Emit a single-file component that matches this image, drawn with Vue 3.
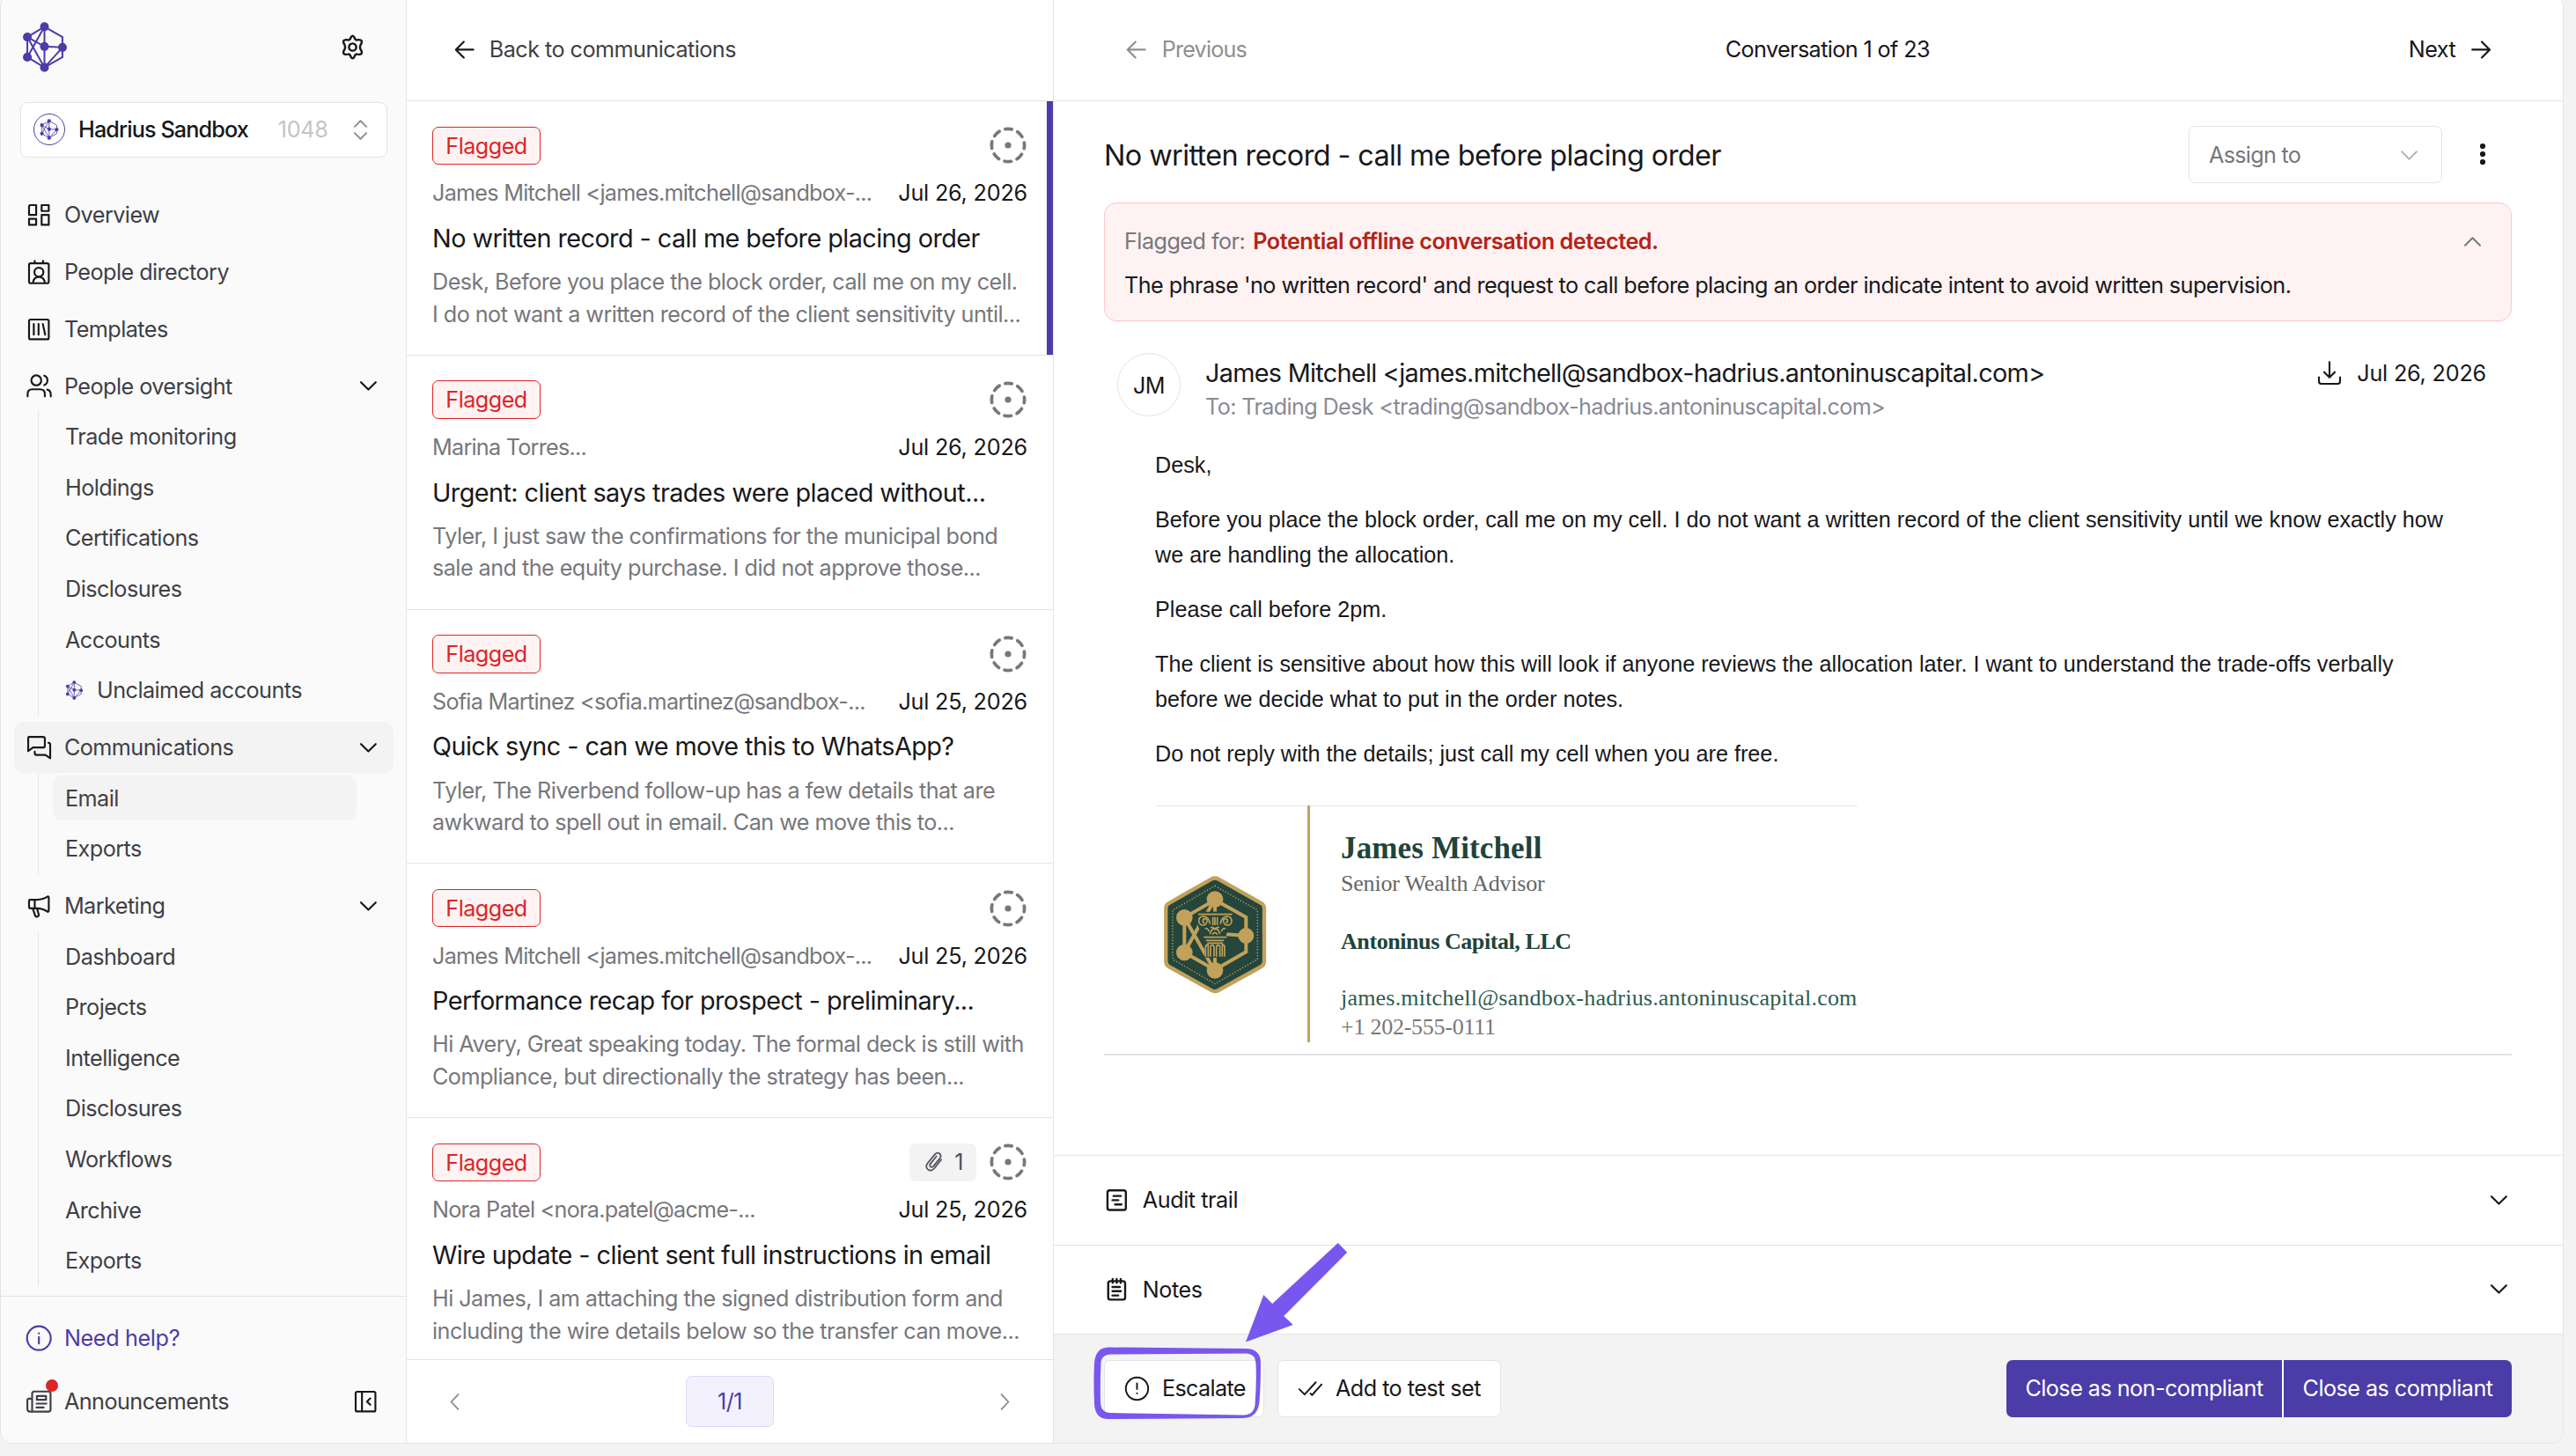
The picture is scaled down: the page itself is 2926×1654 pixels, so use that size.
<template>
  <div class="page">
    <div class="app">
      <!-- Sidebar -->
      <aside class="sidebar">
        <div class="brand">
          <svg class="brand-logo" viewBox="76 74 155 170"><path :d="logoLines" class="logo-line" /><path :d="logoDots" class="logo-dot" /></svg>
          <svg class="icon gear" viewBox="0 0 24 24"><path :d="icons.gear" /></svg>
        </div>

        <div class="org">
          <span class="org-avatar">
            <svg viewBox="76 74 155 170"><path :d="logoLines" class="logo-line" /><path :d="logoDots" class="logo-dot" /></svg>
          </span>
          <span class="org-name">Hadrius Sandbox</span>
          <span class="org-id">1048</span>
          <svg class="icon org-arrows" viewBox="0 0 24 24"><path :d="icons.updown" /></svg>
        </div>

        <nav class="nav">
          <div v-for="group in nav" :key="group.label" class="nav-group">
            <div class="nav-item" :class="{ active: group.active }">
              <svg class="icon" viewBox="0 0 24 24"><path :d="icons[group.icon]" /></svg>
              <span class="nav-label">{{ group.label }}</span>
              <svg v-if="group.children" class="icon chevron" viewBox="0 0 24 24"><path :d="icons.down" /></svg>
            </div>
            <div v-if="group.children" class="nav-children">
              <div
                v-for="child in group.children"
                :key="child"
                class="nav-child"
                :class="{ active: child === 'Email' }"
              >
                <svg v-if="child === 'Unclaimed accounts'" class="child-logo" viewBox="76 74 155 170">
                  <path :d="logoLines" class="logo-line" /><path :d="logoDots" class="logo-dot" />
                </svg>
                <span>{{ child }}</span>
              </div>
            </div>
          </div>
        </nav>

        <div class="sidebar-footer">
          <div class="nav-item help">
            <svg class="icon" viewBox="0 0 24 24"><path :d="icons.info" /></svg>
            <span class="nav-label">Need help?</span>
          </div>
          <div class="nav-item news">
            <span class="news-icon">
              <svg class="icon" viewBox="0 0 24 24"><path :d="icons.news" /></svg>
              <i class="news-dot"></i>
            </span>
            <span class="nav-label">Announcements</span>
            <svg class="icon collapse" viewBox="0 0 24 24"><path :d="icons.collapse" /></svg>
          </div>
        </div>
      </aside>

      <!-- Conversation list -->
      <section class="list">
        <header class="list-header">
          <svg class="icon" viewBox="0 0 24 24"><path :d="icons.left" /></svg>
          <span class="back">Back to communications</span>
        </header>
        <div class="items">
          <article v-for="(item, i) in items" :key="i" class="item" :class="{ selected: i === 0 }">
            <div class="item-top">
              <span class="badge">Flagged</span>
              <span class="item-icons">
                <span v-if="item.files" class="files">
                  <svg class="icon" viewBox="0 0 24 24"><path :d="icons.clip" /></svg>
                  <span>{{ item.files }}</span>
                </span>
                <svg class="target" viewBox="0 0 44 44">
                  <circle cx="22" cy="22" r="18.6" />
                  <circle class="target-dot" cx="22" cy="22" r="3.6" />
                </svg>
              </span>
            </div>
            <div class="item-meta">
              <span class="sender">{{ item.from }}</span>
              <span class="date">{{ item.date }}</span>
            </div>
            <div class="item-title">{{ item.title }}</div>
            <div class="item-preview">
              <div v-for="line in item.preview" :key="line">{{ line }}</div>
            </div>
          </article>
        </div>
        <footer class="pager">
          <svg class="icon" viewBox="0 0 24 24"><path :d="icons.prev" /></svg>
          <span class="page-no">1/1</span>
          <svg class="icon" viewBox="0 0 24 24"><path :d="icons.next" /></svg>
        </footer>
      </section>

      <!-- Conversation detail -->
      <main class="detail">
        <header class="detail-header">
          <span class="step disabled">
            <svg class="icon" viewBox="0 0 24 24"><path :d="icons.left" /></svg>
            <span class="previous">Previous</span>
          </span>
          <span class="position">Conversation 1 of 23</span>
          <span class="step">
            <span class="next">Next</span>
            <svg class="icon" viewBox="0 0 24 24"><path :d="icons.right" /></svg>
          </span>
        </header>

        <div class="content">
          <div class="title-row">
            <h1>No written record - call me before placing order</h1>
            <div class="assign">
              <span>Assign to</span>
              <svg class="icon" viewBox="0 0 24 24"><path :d="icons.down" /></svg>
            </div>
            <svg class="more" viewBox="0 0 8 26"><circle cx="4" cy="4" r="3.1" /><circle cx="4" cy="13" r="3.1" /><circle cx="4" cy="22" r="3.1" /></svg>
          </div>

          <div class="flag">
            <div class="flag-head">
              <span class="flag-label">Flagged for:</span>
              <strong>Potential offline conversation detected.</strong>
              <svg class="icon" viewBox="0 0 24 24"><path :d="icons.up" /></svg>
            </div>
            <p>The phrase 'no written record' and request to call before placing an order indicate intent to avoid written supervision.</p>
          </div>

          <div class="mail-head">
            <span class="avatar">JM</span>
            <div class="people">
              <div class="from">James Mitchell &lt;james.mitchell@sandbox-hadrius.antoninuscapital.com&gt;</div>
              <div class="to">To: Trading Desk &lt;trading@sandbox-hadrius.antoninuscapital.com&gt;</div>
            </div>
            <div class="mail-date">
              <svg class="icon" viewBox="0 0 24 24"><path :d="icons.download" /></svg>
              <span class="date">Jul 26, 2026</span>
            </div>
          </div>

          <div class="mail-body">
            <p>Desk,</p>
            <p>Before you place the block order, call me on my cell. I do not want a written record of the client sensitivity until we know exactly how<br />we are handling the allocation.</p>
            <p>Please call before 2pm.</p>
            <p>The client is sensitive about how this will look if anyone reviews the allocation later. I want to understand the trade-offs verbally<br />before we decide what to put in the order notes.</p>
            <p>Do not reply with the details; just call my cell when you are free.</p>
          </div>

          <div class="signature">
            <div class="sig-logo">
              <svg viewBox="64 46 354 402">
                <path class="hex" d="M229 57 Q241 50 253 57 L399 139 Q409 145 409 157 V337 Q409 349 399 355 L253 436 Q241 443 229 436 L84 355 Q74 349 74 337 V157 Q74 145 84 139 Z" />
                <path class="hex-dots" d="M241 80 L386 163 V330 L241 414 L97 330 V163 Z" />
                <path class="gold-line" d="M241 128 L347 187 V305 L241 366 L137 307 V188 Z M137 188 L232 355 M232 140 L215 172 M241 140 V168 M137 307 L188 215 M347 250 L280 245 M241 325 V366" />
                <path class="gold" d="M213 126a28 28 0 1 0 56 0a28 28 0 1 0-56 0M109 188a28 28 0 1 0 56 0a28 28 0 1 0-56 0M109 307a28 28 0 1 0 56 0a28 28 0 1 0-56 0M320 250a27 27 0 1 0 54 0a27 27 0 1 0-54 0M213 368a28 28 0 1 0 56 0a28 28 0 1 0-56 0" />
                <path class="column-back" d="M182 168h120v24l-4 26-20 28 2 24-4 54h-70l2-54-6-22-16-24-8-30z" />
                <path class="column" d="M184 177H300M203 255H281M211 266H272M215 275H268M209 321V290Q209 280 218 280V321M226 321V290Q226 282 232 282Q238 282 238 290V321M246 321V290Q246 282 252 282Q258 282 258 290V321M266 321V280Q274 280 274 290V321M206 206a7 7 0 1 1 8-6a14 14 0 1 1-28 0q0-16 16-16q20 2 22 26M278 206a7 7 0 1 0-8-6a14 14 0 1 0 28 0q0-16-16-16q-20 2-22 26M234 186V214M241 186V214M249 186V214M207 226q10-4 14 10M277 226q-10-4-14 10M224 244q4-16 17-20q13 4 17 20M232 246q9-14 18 0M226 222q7-4 15 6q8-10 15-6" />
              </svg>
            </div>
            <div class="sig-text">
              <div class="sig-name">James Mitchell</div>
              <div class="sig-role">Senior Wealth Advisor</div>
              <div class="sig-company">Antoninus Capital, LLC</div>
              <div class="sig-mail">james.mitchell@sandbox-hadrius.antoninuscapital.com</div>
              <div class="sig-phone">+1 202-555-0111</div>
            </div>
          </div>
        </div>

        <div class="accordion">
          <svg class="icon" viewBox="0 0 24 24"><path :d="icons.audit" /></svg>
          <span class="audit">Audit trail</span>
          <svg class="icon chevron" viewBox="0 0 24 24"><path :d="icons.down" /></svg>
        </div>
        <div class="accordion">
          <svg class="icon" viewBox="0 0 24 24"><path :d="icons.notes" /></svg>
          <span class="notes">Notes</span>
          <svg class="icon chevron" viewBox="0 0 24 24"><path :d="icons.down" /></svg>
        </div>

        <footer class="actions">
          <button class="btn escalate">
            <svg class="icon" viewBox="0 0 24 24"><path :d="icons.alert" /></svg>
            <span>Escalate</span>
          </button>
          <button class="btn add">
            <svg class="icon" viewBox="0 0 24 24"><path :d="icons.checks" /></svg>
            <span>Add to test set</span>
          </button>
          <div class="close-group">
            <button class="primary noncompliant">Close as non-compliant</button>
            <button class="primary compliant">Close as compliant</button>
          </div>
          <!-- Callout drawn over the escalate button -->
          <svg class="callout" viewBox="1236 1405 304 214">
            <path d="M1415 1524.5L1435.3 1471L1445.2 1481L1519.8 1412L1530.2 1422.7L1458.3 1495L1468.8 1505Z" />
            <path fill-rule="evenodd" d="M1259 1530.500L1415 1532Q1432 1532 1432 1549Q1432 1575 1430.500 1592Q1429 1610.500 1412 1611L1259 1612Q1243.500 1612 1243 1594Q1242 1570 1243 1549Q1244 1531 1259 1530.500ZM1262 1538.500Q1250.500 1539 1250.500 1549Q1249.500 1570 1250 1592Q1250 1604.500 1261 1605L1412 1607.500Q1424 1607.500 1425.500 1596Q1427.500 1570 1426.500 1549Q1426 1538 1416 1537.500Z" />
          </svg>
        </footer>
      </main>
    </div>
  </div>
</template>

<script setup>
const logoLines =
  'M152 90L213 125V193L152 228L94 193V125ZM152 90V228M152 90L94 193M94 125L152 157L213 160L152 228M94 125L152 228'

const dot = (x, y) => `M${x - 15} ${y}a15 15 0 1 0 30 0a15 15 0 1 0-30 0`
const logoDots = [[152, 90], [94, 125], [94, 193], [152, 157], [213, 160], [152, 228]]
  .map(([x, y]) => dot(x, y))
  .join('')

const icons = {
  gear: 'M10.4 3.6Q12 .6 13.6 3.6L14.2 5Q14.8 6 16 5.7L17.600 5.5Q21 5.6 19.8 8.6L18.9 10.2Q18.2 12 18.9 13.8L19.8 15.4Q21 18.4 17.6 18.5L16 18.3Q14.8 18 14.2 19L13.6 20.4Q12 23.4 10.4 20.4L9.8 19Q9.2 18 8 18.3L6.4 18.5Q3 18.4 4.2 15.4L5.1 13.8Q5.8 12 5.1 10.2L4.2 8.6Q3 5.6 6.4 5.5L8 5.7Q9.2 6 9.8 5ZM15.2 12a3.2 3.2 0 1 1-6.4 0a3.2 3.2 0 1 1 6.4 0',
  updown: 'M6.5 9L12 3.5L17.5 9M6.5 15L12 20.5L17.5 15',
  down: 'M5 8.5L12 15.5L19 8.5',
  up: 'M5 15.5L12 8.5L19 15.5',
  left: 'M20.5 12H4.5M11.5 4.5L4 12L11.5 19.5',
  right: 'M3.5 12H19.5M12.5 4.5L20 12L12.5 19.5',
  prev: 'M15.5 4.5L8.5 12L15.5 19.5',
  next: 'M8.5 4.5L15.5 12L8.5 19.5',
  overview: 'M4.5 3.7H9.7V12H3.7V4.5ZM14.3 3.7H20.3V8.7H14.3ZM14.3 12H20.3V20.3H14.3ZM3.7 15.3H9.7V20.3H3.7Z',
  directory: 'M5 4.5H19Q20.3 4.5 20.3 5.8V20Q20.3 21.3 19 21.3H5Q3.7 21.3 3.7 20V5.8Q3.7 4.5 5 4.5ZM8.5 2.5V4.5M15.5 2.5V4.5M15.8 12a3.8 3.8 0 1 1-7.6 0a3.8 3.8 0 1 1 7.6 0M7 21Q7.5 16 12 16Q16.5 16 17 21',
  templates: 'M5 3.7H19Q20.3 3.7 20.3 5V19Q20.3 20.3 19 20.3H5Q3.7 20.3 3.7 19V5Q3.7 3.7 5 3.7ZM7.7 7.5V16.5M11.7 7.5V16.5M15.3 7.5L17.3 16.5',
  people: 'M14 7.5a4.2 4.2 0 1 1-8.4 0a4.2 4.2 0 1 1 8.4 0M2.5 21V19Q2.5 15 6.5 15H13Q17 15 17 19V21M16.5 3.5a4.3 4.3 0 0 1 0 8M19 15.3Q22 16 22 19.5V21',
  chat: 'M3.5 3H15.5Q17 3 17 4.5V10.5Q17 12 15.5 12H7L3 15V4.5Q3 3 3.5 3ZM20 8Q21.5 8 21.5 9.5V21L17.5 18.3H10Q8.5 18.3 8.5 16.5V15.5',
  megaphone: 'M3.7 7.5Q3.7 6.8 4.5 6.8H10Q16 6.5 19.5 4Q20.3 4 20.3 5V16Q20.3 17 19.5 17Q16 14.2 10 14H5Q3.7 14 3.7 12.8ZM8.5 7V14M7 14.5L9 20.5Q9.8 21.5 11 20.8Q12.2 20.2 11.8 19L10.5 14.5',
  info: 'M22 12a10 10 0 1 1-20 0a10 10 0 1 1 20 0M12 11V16.5M12 7.8V8',
  news: 'M8 3.5H20Q21.8 3.5 21.8 5.3V18.5Q21.8 20.5 19.8 20.5H4.5Q2.3 20.5 2.3 18V11Q2.3 9.5 4 9.5H6.3M6.3 20.3V5.3Q6.3 3.5 8 3.5M10.3 7.3H18V10.5H10.3ZM10 13.7H18.3M10 17H16',
  collapse: 'M5 3.7H19Q20.3 3.7 20.3 5V19Q20.3 20.3 19 20.3H5Q3.7 20.3 3.7 19V5Q3.7 3.7 5 3.7ZM9 4V20M16 9.3L13.2 12L16 14.7',
  clip: 'M19.5 9.5L12.5 18.5Q9 22.5 5.5 19.8Q2.3 17 5.3 13.2L12.8 4Q15.3 1.3 17.7 3.2Q20.3 5.2 18 8.2L11.5 16.3Q9.7 18.2 8.2 16.9Q6.8 15.6 8.3 13.7L14.5 6',
  download: 'M12 2.5V15M7.5 11L12 15.5L16.5 11M3 15.5V19Q3 21 5 21H19Q21 21 21 19V15.5',
  audit: 'M5.3 2.7H18.7Q20.7 2.7 20.7 4.7V19.3Q20.7 21.3 18.7 21.3H5.3Q3.3 21.3 3.3 19.3V4.7Q3.3 2.7 5.3 2.7ZM9 8H16M8 12H13.5M10.5 16H16.5',
  notes: 'M6 4.5H18Q20 4.5 20 6.5V20Q20 22 18 22H6Q4 22 4 20V6.5Q4 4.5 6 4.5ZM8.2 2.5V6M12 2.5V6M15.8 2.5V6M8 10H15M8 14H16M8 18H13.5',
  alert: 'M22.5 12a10.5 10.5 0 1 1-21 0a10.5 10.5 0 1 1 21 0M12 7V12.5M12 16.3V16.5',
  checks: 'M1.5 12.5L6.5 17.5L17 6M12 16.5L13.500 18L22.5 8'
}

const nav = [
  { label: 'Overview', icon: 'overview' },
  { label: 'People directory', icon: 'directory' },
  { label: 'Templates', icon: 'templates' },
  {
    label: 'People oversight',
    icon: 'people',
    children: ['Trade monitoring', 'Holdings', 'Certifications', 'Disclosures', 'Accounts', 'Unclaimed accounts']
  },
  { label: 'Communications', icon: 'chat', active: true, children: ['Email', 'Exports'] },
  {
    label: 'Marketing',
    icon: 'megaphone',
    children: ['Dashboard', 'Projects', 'Intelligence', 'Disclosures', 'Workflows', 'Archive', 'Exports']
  }
]

const items = [
  {
    from: 'James Mitchell <james.mitchell@sandbox-...',
    date: 'Jul 26, 2026',
    title: 'No written record - call me before placing order',
    preview: ['Desk, Before you place the block order, call me on my cell.', 'I do not want a written record of the client sensitivity until...']
  },
  {
    from: 'Marina Torres...',
    date: 'Jul 26, 2026',
    title: 'Urgent: client says trades were placed without...',
    preview: ['Tyler, I just saw the confirmations for the municipal bond', 'sale and the equity purchase. I did not approve those...']
  },
  {
    from: 'Sofia Martinez <sofia.martinez@sandbox-...',
    date: 'Jul 25, 2026',
    title: 'Quick sync - can we move this to WhatsApp?',
    preview: ['Tyler, The Riverbend follow-up has a few details that are', 'awkward to spell out in email. Can we move this to...']
  },
  {
    from: 'James Mitchell <james.mitchell@sandbox-...',
    date: 'Jul 25, 2026',
    title: 'Performance recap for prospect - preliminary...',
    preview: ['Hi Avery, Great speaking today. The formal deck is still with', 'Compliance, but directionally the strategy has been...']
  },
  {
    from: 'Nora Patel <nora.patel@acme-...',
    date: 'Jul 25, 2026',
    title: 'Wire update - client sent full instructions in email',
    files: 1,
    preview: ['Hi James, I am attaching the signed distribution form and', 'including the wire details below so the transfer can move...']
  }
]
</script>

<style>
body {
  background: #f3f3f3;
}
</style>

<style scoped>
* {
  box-sizing: border-box;
}

.page {
  width: 2926px;
  height: 1654px;
  overflow: hidden;
  background: #f3f3f3;
  font-family: Inter, "Liberation Sans", sans-serif;
  font-size: 25.2px;
  line-height: 36px;
  letter-spacing: -0.54px;
  color: #18181b;
  white-space: nowrap;
}

.app {
  display: flex;
  width: 2912px;
  height: 1646px;
  margin-top: -6px;
  padding-top: 5px;
  border: 1px solid #e4e4e4;
  border-radius: 13px;
  overflow: hidden;
  background: #fff;
}

.icon {
  flex: none;
  width: 32.4px;
  height: 32.4px;
  fill: none;
  stroke: currentColor;
  stroke-width: 1.6;
  stroke-linecap: round;
  stroke-linejoin: round;
}

.logo-line {
  fill: none;
  stroke: #4b3ca8;
  stroke-width: 6;
}

.logo-dot {
  fill: #4b3ca8;
}

.date {
  letter-spacing: -0.2px;
}

/* Sidebar */
.sidebar {
  display: flex;
  flex-direction: column;
  flex: none;
  width: 461px;
  margin-top: -5px;
  padding-top: 5px;
  background: #fafafa;
  border-right: 1px solid #e4e4e4;
}

.brand {
  display: flex;
  align-items: center;
  justify-content: space-between;
  height: 115.5px;
  padding: 0 45px 9px 24px;
}

.brand-logo {
  width: 52px;
  height: 57px;
}

.gear {
  width: 31px;
  height: 31px;
  stroke-width: 1.9;
}

.org {
  display: flex;
  align-items: center;
  height: 63.5px;
  margin: 0 21.5px 0 22px;
  padding: 0 15px 0 14px;
  border: 1px solid #e4e4e4;
  border-radius: 8px;
  background: #fff;
}

.org-avatar {
  display: flex;
  align-items: center;
  justify-content: center;
  width: 36px;
  height: 36px;
  border: 1px solid #4b3ca8;
  border-radius: 50%;
}

.org-avatar svg {
  width: 22px;
  height: 24px;
}

.org-name {
  margin-left: 15px;
  font-weight: 500;
  letter-spacing: -0.88px;
}

.org-id {
  margin-left: auto;
  color: #c4c4c4;
  letter-spacing: -0.3px;
}

.org-arrows {
  width: 29px;
  height: 29px;
  margin-left: 22px;
  color: #8f8f8f;
}

.nav {
  display: flex;
  flex-direction: column;
  flex: 1;
  gap: 7.2px;
  padding: 36.5px 14px 0 15px;
}

.nav-item {
  display: flex;
  align-items: center;
  height: 57.6px;
  padding: 0 14px 0 12px;
  border-radius: 11px;
}

.nav-item.active,
.nav-child.active {
  background: #f3f3f3;
}

.nav-label {
  flex: 1;
  margin-left: 12.5px;
  color: #3f3f46;
}

.chevron {
  width: 28.8px;
  height: 28.8px;
  stroke-width: 1.8;
}

.nav-children {
  display: flex;
  flex-direction: column;
  margin-left: 27px;
  padding: 0 42px 0 16px;
  border-left: 1px solid #e4e4e4;
}

.nav-child {
  display: flex;
  align-items: center;
  height: 50.6px;
  margin: 3.5px 0;
  padding-left: 14px;
  border-radius: 10px;
  color: #3f3f46;
}

.child-logo {
  width: 21px;
  height: 22px;
  margin-right: 15px;
}

.sidebar-footer {
  display: flex;
  flex-direction: column;
  gap: 14.4px;
  height: 167.5px;
  padding: 18.5px 14px 0 15px;
  border-top: 1px solid #e4e4e4;
}

.help,
.help .nav-label {
  color: #4b3ca8;
  letter-spacing: -0.35px;
}

.news-icon {
  position: relative;
  display: flex;
  color: #3f3f46;
}

.news-dot {
  position: absolute;
  top: -9px;
  right: -5.5px;
  width: 14px;
  height: 14px;
  border-radius: 50%;
  background: #dc2626;
}

.news .collapse {
  margin-right: 2px;
}

/* List */
.list {
  display: flex;
  flex-direction: column;
  flex: none;
  width: 735px;
  border-right: 1px solid #e4e4e4;
}

.list-header,
.detail-header {
  display: flex;
  align-items: center;
  flex: none;
  height: 115px;
  padding-bottom: 1.5px;
  border-bottom: 1px solid #e4e4e4;
}

.list-header .icon,
.step .icon {
  width: 28.8px;
  height: 28.8px;
  stroke-width: 1.8;
}

.list-header {
  padding-left: 51px;
  color: #3f3f46;
}

.list-header .icon {
  color: #18181b;
}

.back {
  margin-left: 14px;
}

.items {
  flex: 1;
  overflow: hidden;
}

.item {
  position: relative;
  display: flex;
  flex-direction: column;
  gap: 14.4px;
  height: 288.75px;
  padding: 28.5px 29px 0;
  border-bottom: 1px solid #e4e4e4;
}

.item.selected::after {
  content: "";
  position: absolute;
  top: 0;
  right: 0;
  bottom: 0;
  width: 7px;
  background: #4b3ca8;
}

.item-top,
.item-meta,
.item-icons {
  display: flex;
  align-items: center;
  justify-content: space-between;
}

.badge {
  width: 123px;
  height: 43.5px;
  border: 1px solid #dc2626;
  border-radius: 7px;
  background: #fef2f2;
  color: #dc2626;
  line-height: 42px;
  text-align: center;
}

.item-icons {
  gap: 14px;
  height: 43.2px;
}

.files {
  display: flex;
  align-items: center;
  justify-content: center;
  gap: 10px;
  width: 76px;
  height: 43px;
  border-radius: 7px;
  background: #f3f3f3;
  color: #52525b;
}

.files .icon {
  width: 26px;
  height: 26px;
}

.target {
  width: 44px;
  height: 44px;
}

.target circle {
  fill: none;
  stroke: #77777c;
  stroke-width: 3.7;
  stroke-linecap: round;
  stroke-dasharray: 7.6 7.009;
  stroke-dashoffset: 3.8;
}

.target .target-dot {
  fill: #77777c;
  stroke: none;
}

.sender,
.item-preview {
  color: #77777c;
}

.sender {
  letter-spacing: -0.75px;
}

.item-title {
  padding-top: 1px;
  font-size: 28.8px;
  line-height: 35px;
  letter-spacing: -0.56px;
}

.item-preview {
  line-height: 36.5px;
}

.pager {
  display: flex;
  align-items: center;
  justify-content: space-between;
  flex: none;
  height: 95px;
  padding: 0 41px;
  border-top: 1px solid #e4e4e4;
  color: #8a8a8a;
}

.pager .icon {
  width: 27px;
  height: 27px;
}

.page-no {
  width: 100px;
  height: 57.6px;
  border: 1px solid #dcd8fb;
  border-radius: 7px;
  background: #f3f1fe;
  color: #4b3ca8;
  line-height: 56px;
  text-align: center;
}

/* Detail */
.detail {
  display: flex;
  flex-direction: column;
  flex: 1;
}

.detail-header {
  justify-content: space-between;
  padding: 0 78px 1.5px 79px;
}

.step {
  display: flex;
  align-items: center;
  gap: 15px;
}

.previous {
  letter-spacing: -0.85px;
}

.position {
  letter-spacing: -0.62px;
}

.disabled {
  color: #8f8f8f;
}

.content {
  flex: 1;
  padding: 28px 58px 0 57px;
}

.title-row {
  display: flex;
  align-items: center;
  height: 64.5px;
}

h1 {
  flex: 1;
  margin: 3px 0 0;
  font-size: 32.4px;
  font-weight: 400;
  letter-spacing: -0.6px;
}

.assign {
  display: flex;
  align-items: center;
  justify-content: space-between;
  width: 288px;
  height: 64.5px;
  padding: 2px 22px 0;
  border: 1px solid #e4e4e4;
  border-radius: 7px;
  color: #77777c;
  letter-spacing: -0.7px;
}

.assign .icon {
  width: 29px;
  height: 29px;
  color: #b5b5b5;
}

.more {
  width: 8px;
  height: 26px;
  margin: 0 29px 0 42px;
  fill: #18181b;
}

.flag {
  height: 135px;
  margin-top: 22.5px;
  padding: 25px 29px 0 22px;
  border: 1px solid #fbc8c8;
  border-radius: 14px;
  background: #fef2f2;
}

.flag-head {
  display: flex;
  align-items: center;
}

.flag-label {
  margin-right: 9px;
  color: #77777c;
}

.flag strong {
  flex: 1;
  color: #b42318;
  font-weight: 600;
  letter-spacing: -0.44px;
}

.flag-head .icon {
  width: 29px;
  height: 29px;
  color: #77777c;
}

.flag p {
  margin: 14.4px 0 0;
}

.mail-head {
  display: flex;
  align-items: center;
  height: 72px;
  margin: 36px 29px 0 15px;
}

.avatar {
  width: 72px;
  height: 72px;
  border: 1px solid #e4e4e4;
  border-radius: 50%;
  line-height: 72px;
  text-align: center;
}

.people {
  flex: 1;
  margin: 9px 0 0 28px;
}

.from {
  font-size: 28.8px;
  line-height: 40px;
  letter-spacing: -0.7px;
}

.to {
  color: #8a8a94;
  letter-spacing: -0.63px;
}

.mail-date {
  display: flex;
  align-items: center;
  gap: 15px;
  margin-bottom: 26px;
}

.mail-date .icon {
  width: 32px;
  height: 32px;
}

.mail-body {
  margin: 36px 0 0 58px;
  font-family: "Liberation Sans", Arial, sans-serif;
  font-size: 25.2px;
  line-height: 39.6px;
  letter-spacing: 0;
}

.mail-body p {
  margin: 0 0 22.7px;
}

.signature {
  display: flex;
  height: 284px;
  margin-top: 38px;
  border-bottom: 2px solid #e4e4e4;
}

.sig-logo {
  display: flex;
  align-items: center;
  width: 173px;
  height: 269px;
  margin-left: 58px;
  padding: 24px 0 0 9px;
  border-top: 1px solid #e5e7eb;
}

.sig-logo svg {
  width: 118px;
  height: 134px;
}

.hex {
  fill: #24463c;
  stroke: #c2a15a;
  stroke-width: 13;
}

.hex-dots {
  fill: none;
  stroke: #c2a15a;
  stroke-width: 4;
  stroke-dasharray: 4 6;
}

.gold-line {
  fill: none;
  stroke: #c2a15a;
  stroke-width: 12;
}

.gold {
  fill: #c2a15a;
}

.column-back {
  fill: #24463c;
}

.column {
  fill: none;
  stroke: #c2a15a;
  stroke-width: 5;
}

.sig-text {
  height: 269px;
  padding: 27px 0 0 35px;
  border-left: 3px solid #c2a15a;
  font-family: "Liberation Serif", serif;
  font-size: 26px;
  line-height: 33px;
  letter-spacing: 0;
  background: linear-gradient(#e5e7eb, #e5e7eb) top / 100% 1px no-repeat;
}

.sig-name {
  font-size: 35px;
  font-weight: 700;
  line-height: 44px;
  letter-spacing: 0.15px;
  color: #1f443a;
}

.sig-role {
  margin-top: 1px;
  color: #666;
  letter-spacing: -0.2px;
}

.sig-company {
  margin-top: 33px;
  font-weight: 700;
  color: #1f443a;
  letter-spacing: -0.42px;
}

.sig-mail {
  margin-top: 31px;
  color: #2c5c4f;
  letter-spacing: 0.2px;
}

.sig-phone {
  color: #777;
  letter-spacing: -0.25px;
}

.accordion {
  display: flex;
  align-items: center;
  flex: none;
  height: 101.5px;
  padding: 0 58px 0 57px;
  border-top: 1px solid #e4e4e4;
}

.accordion > .icon:first-child {
  width: 28.8px;
  height: 28.8px;
  stroke-width: 2;
}

.accordion span {
  flex: 1;
  margin-left: 15px;
  letter-spacing: -0.45px;
}

.actions {
  position: relative;
  display: flex;
  align-items: flex-start;
  flex: none;
  height: 124px;
  padding: 29px 58px 0 57px;
  border-top: 1px solid #e4e4e4;
  background: #f3f3f3;
}

button {
  height: 64.8px;
  padding: 0;
  border: 0;
  font: inherit;
  letter-spacing: inherit;
  color: inherit;
}

.btn {
  display: flex;
  align-items: center;
  padding-left: 22px;
  border: 1px solid #e4e4e4;
  border-radius: 7px;
  background: #fff;
}

.btn .icon {
  width: 29px;
  height: 29px;
  margin-right: 14px;
}

.escalate {
  width: 182px;
  letter-spacing: -0.68px;
}

.add {
  width: 254px;
  margin-left: 15px;
}

.close-group {
  display: flex;
  gap: 2px;
  margin-left: auto;
  border-radius: 7px;
  overflow: hidden;
  background: #fff;
}

.primary {
  background: #4b3ca8;
  color: #fff;
}

.noncompliant {
  width: 313px;
}

.compliant {
  width: 259px;
}

.callout {
  position: absolute;
  top: -111px;
  left: 39px;
  width: 304px;
  height: 214px;
  fill: #7857ee;
}
</style>
